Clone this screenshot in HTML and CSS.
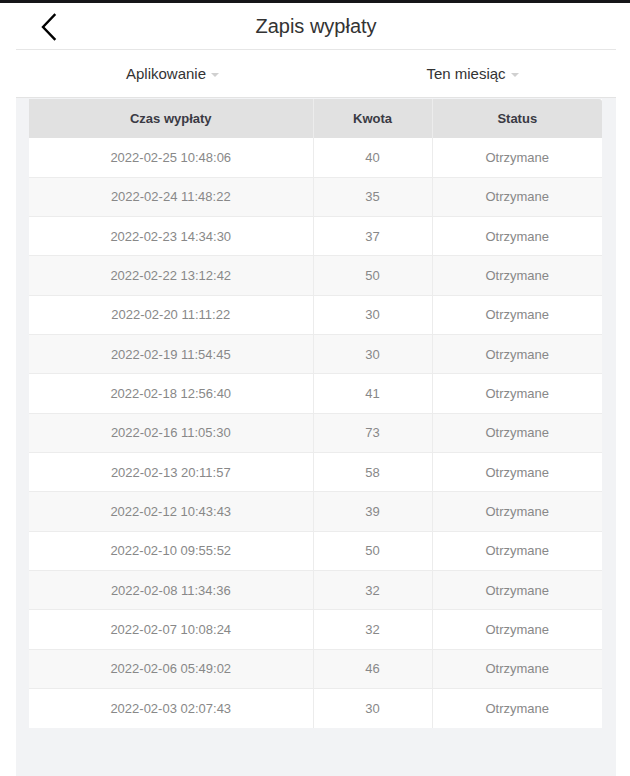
FILE: index.html
```html
<!DOCTYPE html>
<html lang="pl">
<head>
<meta charset="utf-8">
<title>Zapis wypłaty</title>
<link rel="stylesheet" href="styles.css">
</head>
<body>
<div class="topbar"></div>
<div class="page">
  <header class="header">
    <a class="back" href="#" aria-label="Wstecz">
      <svg width="16" height="28" viewBox="0 0 16 28"><path d="M13.5 2 L2 14 L13.5 26" fill="none" stroke="#000" stroke-width="2.4" stroke-linecap="square"/></svg>
    </a>
    <h1 class="title">Zapis wypłaty</h1>
  </header>
  <nav class="tabs">
    <div class="tab"><span class="tab-label">Aplikowanie<i class="caret"></i></span></div>
    <div class="tab"><span class="tab-label">Ten miesiąc<i class="caret"></i></span></div>
  </nav>
  <main class="content">
    <table class="records">
      <colgroup><col class="c1"><col class="c2"><col class="c3"></colgroup>
      <thead>
        <tr><th>Czas wypłaty</th><th>Kwota</th><th>Status</th></tr>
      </thead>
      <tbody>
        <tr><td>2022-02-25 10:48:06</td><td>40</td><td>Otrzymane</td></tr>
        <tr><td>2022-02-24 11:48:22</td><td>35</td><td>Otrzymane</td></tr>
        <tr><td>2022-02-23 14:34:30</td><td>37</td><td>Otrzymane</td></tr>
        <tr><td>2022-02-22 13:12:42</td><td>50</td><td>Otrzymane</td></tr>
        <tr><td>2022-02-20 11:11:22</td><td>30</td><td>Otrzymane</td></tr>
        <tr><td>2022-02-19 11:54:45</td><td>30</td><td>Otrzymane</td></tr>
        <tr><td>2022-02-18 12:56:40</td><td>41</td><td>Otrzymane</td></tr>
        <tr><td>2022-02-16 11:05:30</td><td>73</td><td>Otrzymane</td></tr>
        <tr><td>2022-02-13 20:11:57</td><td>58</td><td>Otrzymane</td></tr>
        <tr><td>2022-02-12 10:43:43</td><td>39</td><td>Otrzymane</td></tr>
        <tr><td>2022-02-10 09:55:52</td><td>50</td><td>Otrzymane</td></tr>
        <tr><td>2022-02-08 11:34:36</td><td>32</td><td>Otrzymane</td></tr>
        <tr><td>2022-02-07 10:08:24</td><td>32</td><td>Otrzymane</td></tr>
        <tr><td>2022-02-06 05:49:02</td><td>46</td><td>Otrzymane</td></tr>
        <tr><td>2022-02-03 02:07:43</td><td>30</td><td>Otrzymane</td></tr>
      </tbody>
    </table>
  </main>
</div>
</body>
</html>
```
FILE: styles.css
```css
* { box-sizing: border-box; }
html, body { margin: 0; padding: 0; background: #fff; }
body { font-family: "Liberation Sans", Arial, sans-serif; color: #333; }

.topbar { height: 3px; background: #151518; }

.page {
  margin-left: 16px;
  width: 600px;
  min-height: 773px;
  display: flex;
  flex-direction: column;
}

.header {
  position: relative;
  height: 47px;
  border-bottom: 1px solid #e6e6e6;
  display: flex;
  align-items: center;
  justify-content: center;
}
.back {
  position: absolute;
  left: 25px;
  top: 10px;
  display: block;
  width: 16px;
  height: 28px;
}
.back svg { display: block; }
.title {
  margin: 0;
  font-size: 20px;
  font-weight: normal;
  color: #333;
}

.tabs {
  height: 48px;
  border-bottom: 1px solid #e3e3e3;
  display: grid;
  grid-template-columns: 1fr 1fr;
}
.tab {
  display: flex;
  align-items: center;
  justify-content: center;
  font-size: 15px;
  color: #333;
}
.tab-label { position: relative; }
.caret {
  position: absolute;
  left: 100%;
  top: 50%;
  margin-left: 5px;
  margin-top: -1px;
  width: 0;
  height: 0;
  border-left: 4px solid transparent;
  border-right: 4px solid transparent;
  border-top: 4px solid #d0d0d0;
}

.content {
  flex: 1;
  background: #f2f3f5;
  padding: 1px 14px 0 13px;
}

.records {
  width: 573px;
  border-collapse: collapse;
  table-layout: fixed;
  background: #fff;
}
.c1 { width: 284px; }
.c2 { width: 119px; }
.c3 { width: 170px; }

.records th {
  height: 39px;
  background: #e1e1e1;
  font-size: 13px;
  font-weight: bold;
  color: #3a3a44;
  border-left: 1px solid #ececec;
  text-align: center;
  padding: 0;
}
.records th:first-child { border-left: none; }
.records th:last-child { border-top-right-radius: 3px; }

.records td {
  height: 39.33px;
  font-size: 13px;
  color: #888;
  text-align: center;
  padding: 0;
  border-top: 1px solid #ececec;
  border-left: 1px solid #ececec;
}
.records td:first-child { border-left: none; }
.records tbody tr:first-child td { border-top: none; }
.records tbody tr:nth-child(even) td { background: #f8f8f8; }
```
